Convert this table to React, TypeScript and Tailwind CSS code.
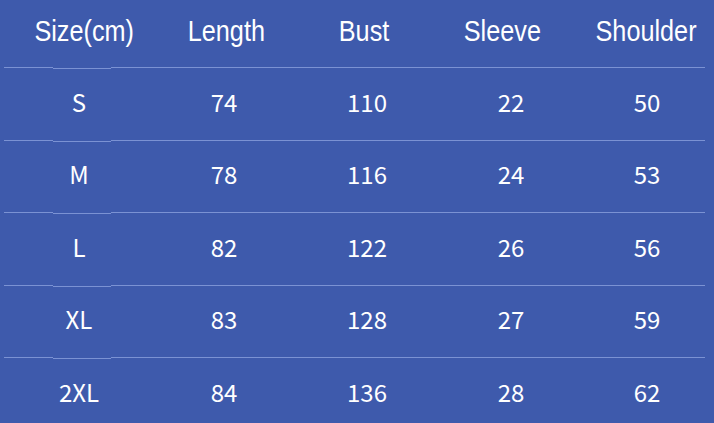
import React from "react";

const headers = [
  { label: "Size(cm)", shift: "ml-[10px]" },
  { label: "Length", shift: "ml-[4px]" },
  { label: "Bust", shift: "mr-[6px]" },
  { label: "Sleeve", shift: "mr-[18px]" },
  { label: "Shoulder", shift: "mr-[2px]" },
];

const rows = [
  ["S", "74", "110", "22", "50"],
  ["M", "78", "116", "24", "53"],
  ["L", "82", "122", "26", "56"],
  ["XL", "83", "128", "27", "59"],
  ["2XL", "84", "136", "28", "62"],
];

const cols = "grid grid-cols-[150px_140px_146px_142px_130px]";

const Divider = () => (
  <div className="flex h-px pl-[4px] pr-[9px]">
    <div className="w-[49px] bg-[#7b92d3]" />
    <div className="w-[58px] translate-y-px bg-[#7b92d3]" />
    <div className="flex-1 bg-[#7b92d3]" />
  </div>
);

export default function App() {
  return (
    <div className="w-[714px] h-[423px] overflow-hidden bg-[#3e5aac] text-white">
      <div className={`${cols} h-[67px] items-center pl-[4px] font-['Liberation_Sans',sans-serif] text-[29px] pb-[3px]`}>
        {headers.map((h) => (
          <div key={h.label} className="flex justify-center">
            <span className={`inline-block scale-x-[0.87] ${h.shift}`}>{h.label}</span>
          </div>
        ))}
      </div>
      {rows.map((r) => (
        <div key={r[0]}>
          <Divider />
          <div className={`${cols} h-[71.5px] items-center pl-[4px] pb-[4px] font-['Noto_Sans_CJK_SC','Noto_Sans',sans-serif] text-[24px]`}>
            {r.map((v, i) => (
              <div key={i} className="text-center">
                {v}
              </div>
            ))}
          </div>
        </div>
      ))}
    </div>
  );
}
